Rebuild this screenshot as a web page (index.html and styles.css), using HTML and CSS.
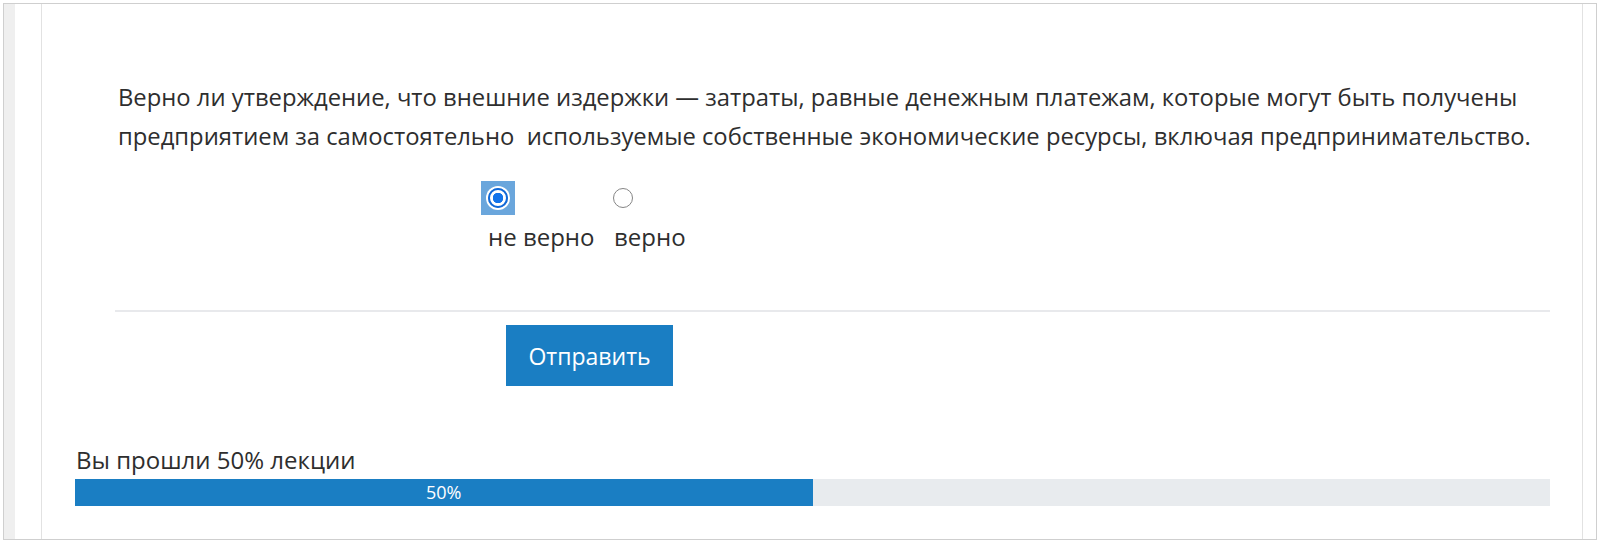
FILE: index.html
```html
<!DOCTYPE html>
<html lang="ru">
<head>
    <meta charset="UTF-8">
    <meta name="viewport" content="width=device-width, initial-scale=1.0">
    <title>Лекция</title>
    <link rel="stylesheet" href="styles.css">
</head>
<body>
    <div class="frame">
        <div class="side-strip"></div>
        <div class="page">
            <div class="question">
                <p class="question-text">Верно ли утверждение, что внешние издержки — затраты, равные денежным платежам, которые могут быть получены предприятием за самостоятельно&nbsp; используемые собственные экономические ресурсы, включая предпринимательство.</p>
                <div class="answers">
                    <div class="answer">
                        <span class="radio-focus"><span class="radio checked"></span></span>
                        <span class="answer-label">не верно</span>
                    </div>
                    <div class="answer">
                        <span class="radio"></span>
                        <span class="answer-label">верно</span>
                    </div>
                </div>
                <hr class="divider">
                <button class="submit" type="button">Отправить</button>
            </div>
            <div class="progress-block">
                <div class="progress-label">Вы прошли 50% лекции</div>
                <div class="progress">
                    <div class="progress-fill" style="width: 50%">50%</div>
                </div>
            </div>
        </div>
    </div>
</body>
</html>
```

FILE: styles.css
```css
body {
    margin: 0;
    padding: 3px 3px 4px 3px;
    font-family: "Open Sans", "Noto Sans", Arial, sans-serif;
    color: #2e2e2e;
    background-color: white;
}
.frame {
    display: flex;
    height: 535px;
    border: 1px solid #cfcfcf;
    box-sizing: content-box;
    overflow: hidden;
}
.side-strip {
    width: 11px;
    background-color: #efefef;
}
.page {
    flex: 1;
    margin: 0 13px 0 26px;
    border-left: 1px solid #e2e2e2;
    border-right: 1px solid #e2e2e2;
    padding: 0 32px 0 33px;
}
.question {
    margin-left: 40px;
    padding-top: 74px;
}
.question-text {
    margin: 0 -10px 0 3px;
    font-size: 23.8px;
    line-height: 39px;
}
.answers {
    display: grid;
    grid-template-columns: 126px auto;
    margin: 25px 0 0 366px;
}
.answer {
    display: flex;
    flex-direction: column;
    align-items: flex-start;
}
.radio-focus {
    display: flex;
    align-items: center;
    justify-content: center;
    width: 34px;
    height: 34px;
    background-color: #6aa6dc;
    box-sizing: border-box;
    padding: 5px;
}
.radio {
    display: block;
    width: 20px;
    height: 20px;
    margin: 7px 0 7px 6px;
    border: 1.5px solid #858585;
    border-radius: 50%;
    background-color: white;
    box-sizing: border-box;
}
.radio-focus .radio {
    margin: 0;
}
.radio.checked {
    border: 2px solid #1068d8;
    background: radial-gradient(circle, #1273ea 0 5px, white 5.5px);
    box-shadow: 0 0 0 2px white;
}
.answer-label {
    font-size: 24px;
    line-height: 28px;
    margin-top: 8px;
    padding-left: 7px;
}
.answer + .answer .answer-label {
    padding-left: 7px;
}
.divider {
    margin: 59px 0 0 0;
    border: none;
    border-top: 2px solid #e8e9ec;
}
.submit {
    display: block;
    margin: 13px 0 0 391px;
    width: 167px;
    height: 61px;
    border: none;
    background-color: #1a7ec3;
    color: white;
    font-family: inherit;
    font-size: 23px;
    cursor: pointer;
}
.progress-block {
    margin-top: 60px;
}
.progress-label {
    font-size: 24px;
    line-height: 28px;
    padding-left: 1px;
}
.progress {
    height: 27px;
    margin-top: 5px;
    background-color: #e8ebee;
}
.progress-fill {
    height: 100%;
    background-color: #1a7ec3;
    color: white;
    font-size: 18px;
    line-height: 27px;
    text-align: center;
}
```
